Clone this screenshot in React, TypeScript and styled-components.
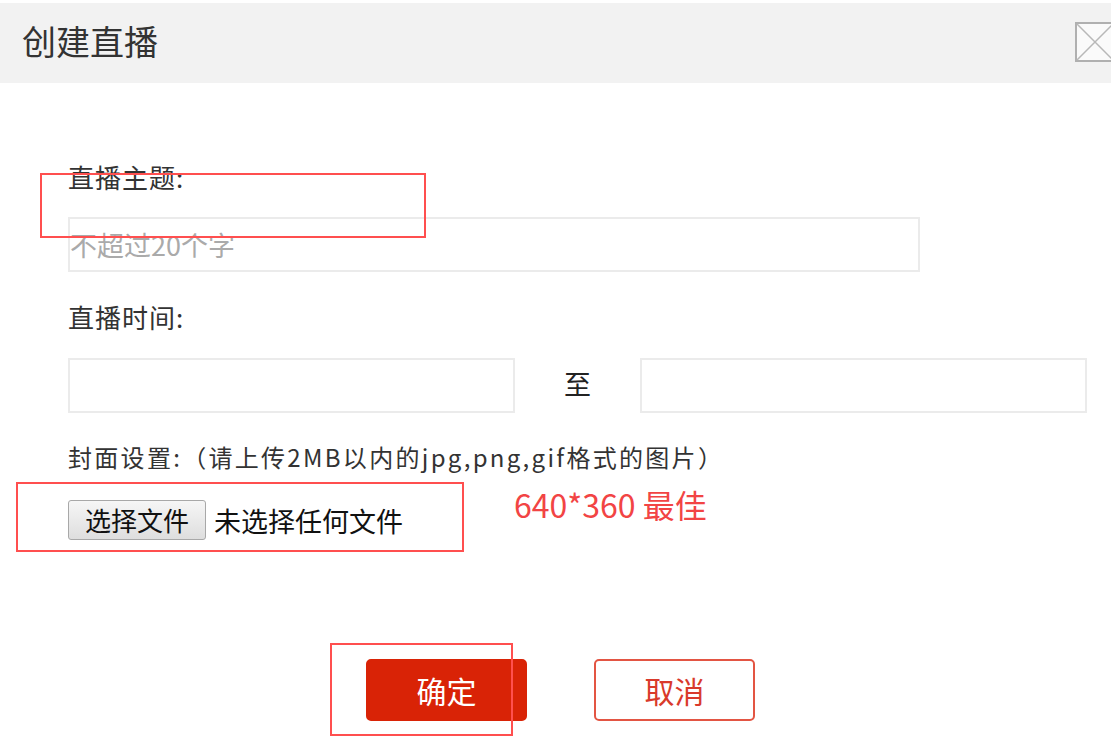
import React from 'react';
import styled, { createGlobalStyle } from 'styled-components';

const GlobalStyle = createGlobalStyle`
  html, body {
    margin: 0;
    padding: 0;
    background: #fff;
  }
  body {
    font-family: "Noto Sans CJK SC", "Noto Sans", sans-serif;
    color: #333;
  }
`;

const Dialog = styled.div`
  position: relative;
  width: 1111px;
  height: 754px;
  overflow: hidden;
  padding-top: 3px;
  box-sizing: border-box;
`;

const Header = styled.div`
  height: 80px;
  background: #f2f2f2;
  display: flex;
  align-items: center;
  justify-content: space-between;
  padding-left: 22px;
`;

const Title = styled.h2`
  margin: 0;
  font-size: 34px;
  font-weight: 400;
  color: #333;
  line-height: 1;
  margin-top: -4px;
`;

const CloseBox = styled.div`
  width: 40px;
  height: 40px;
  margin-right: -4px;
  margin-top: -2px;
  flex-shrink: 0;
  svg { display: block; }
`;

const Body = styled.div`
  padding: 81px 0 0 68px;
  display: flex;
  flex-direction: column;
`;

const Label = styled.div<{ $gap: number }>`
  font-size: 26px;
  line-height: 26px;
  color: #333;
  letter-spacing: 1px;
  margin-bottom: ${(p) => p.$gap}px;
`;

const Input = styled.input<{ $w: number }>`
  box-sizing: border-box;
  width: ${(p) => p.$w}px;
  height: 55px;
  border: 2px solid #ebebeb;
  background: #fff;
  padding: 0;
  font-family: inherit;
  font-size: 27px;
  color: #333;
  outline: none;
  &::placeholder {
    color: #aaa;
  }
`;

const Field = styled.div<{ $gap: number }>`
  margin-bottom: ${(p) => p.$gap}px;
`;

const TimeRow = styled.div`
  display: flex;
  align-items: center;
  margin-bottom: 31px;
`;

const To = styled.span`
  width: 125px;
  text-align: center;
  font-size: 27px;
  color: #222;
  padding-bottom: 4px;
`;

const CoverLabel = styled.div`
  font-size: 24px;
  line-height: 26px;
  color: #333;
  margin-bottom: 18px;
  letter-spacing: 2.3px;
  white-space: nowrap;
`;

const FileRow = styled.div`
  display: flex;
  align-items: flex-start;
  margin-bottom: 119px;
`;

const FilePick = styled.div`
  display: flex;
  align-items: center;
  margin-top: 12px;
  width: 446px;
`;

const FileButton = styled.button`
  box-sizing: border-box;
  width: 138px;
  height: 40px;
  border: 1px solid #a8a8a8;
  border-radius: 3px;
  background: linear-gradient(#f6f6f6, #dedede);
  font-family: inherit;
  font-size: 26px;
  color: #111;
  padding: 0;
  line-height: 1;
`;

const FileName = styled.span`
  margin-left: 8px;
  font-size: 27px;
  color: #111;
`;

const Hint = styled.span`
  font-size: 32px;
  line-height: 32px;
  color: #f24444;
`;

const Actions = styled.div`
  display: flex;
  gap: 67px;
  padding-left: 298px;
`;

const Btn = styled.button<{ $primary?: boolean }>`
  box-sizing: border-box;
  width: 161px;
  height: 62px;
  border-radius: 5px;
  font-family: inherit;
  font-size: 30px;
  cursor: pointer;
  border: 2px solid ${(p) => (p.$primary ? '#d92306' : '#e35543')};
  background: ${(p) => (p.$primary ? '#d92306' : '#fff')};
  color: ${(p) => (p.$primary ? '#fff' : '#d93a2b')};
`;

const Mark = styled.div<{ $x: number; $y: number; $w: number; $h: number }>`
  position: absolute;
  left: ${(p) => p.$x}px;
  top: ${(p) => p.$y}px;
  width: ${(p) => p.$w}px;
  height: ${(p) => p.$h}px;
  box-sizing: border-box;
  border: 2px solid #ff4f4f;
  pointer-events: none;
`;

export default function App() {
  return (
    <>
      <GlobalStyle />
      <Dialog>
        <Header>
          <Title>创建直播</Title>
          <CloseBox>
            <svg width="40" height="40" viewBox="0 0 40 40">
              <rect x="1" y="1" width="38" height="38" fill="#fafafa" stroke="#b0b0b0" strokeWidth="2" />
              <path d="M2 2 L38 38 M38 2 L2 38" stroke="#b8b8b8" strokeWidth="1.5" />
            </svg>
          </CloseBox>
        </Header>
        <Body>
          <Label $gap={27}>直播主题:</Label>
          <Field $gap={32}>
            <Input $w={852} placeholder="不超过20个字" />
          </Field>
          <Label $gap={28}>直播时间:</Label>
          <TimeRow>
            <Input $w={447} />
            <To>至</To>
            <Input $w={447} />
          </TimeRow>
          <CoverLabel>封面设置:（请上传2MB以内的jpg,png,gif格式的图片）</CoverLabel>
          <FileRow>
            <FilePick>
              <FileButton>选择文件</FileButton>
              <FileName>未选择任何文件</FileName>
            </FilePick>
            <Hint>640*360 最佳</Hint>
          </FileRow>
          <Actions>
            <Btn $primary>确定</Btn>
            <Btn>取消</Btn>
          </Actions>
        </Body>
        <Mark $x={40} $y={173} $w={386} $h={65} />
        <Mark $x={16} $y={482} $w={448} $h={70} />
        <Mark $x={330} $y={643} $w={183} $h={93} />
      </Dialog>
    </>
  );
}
